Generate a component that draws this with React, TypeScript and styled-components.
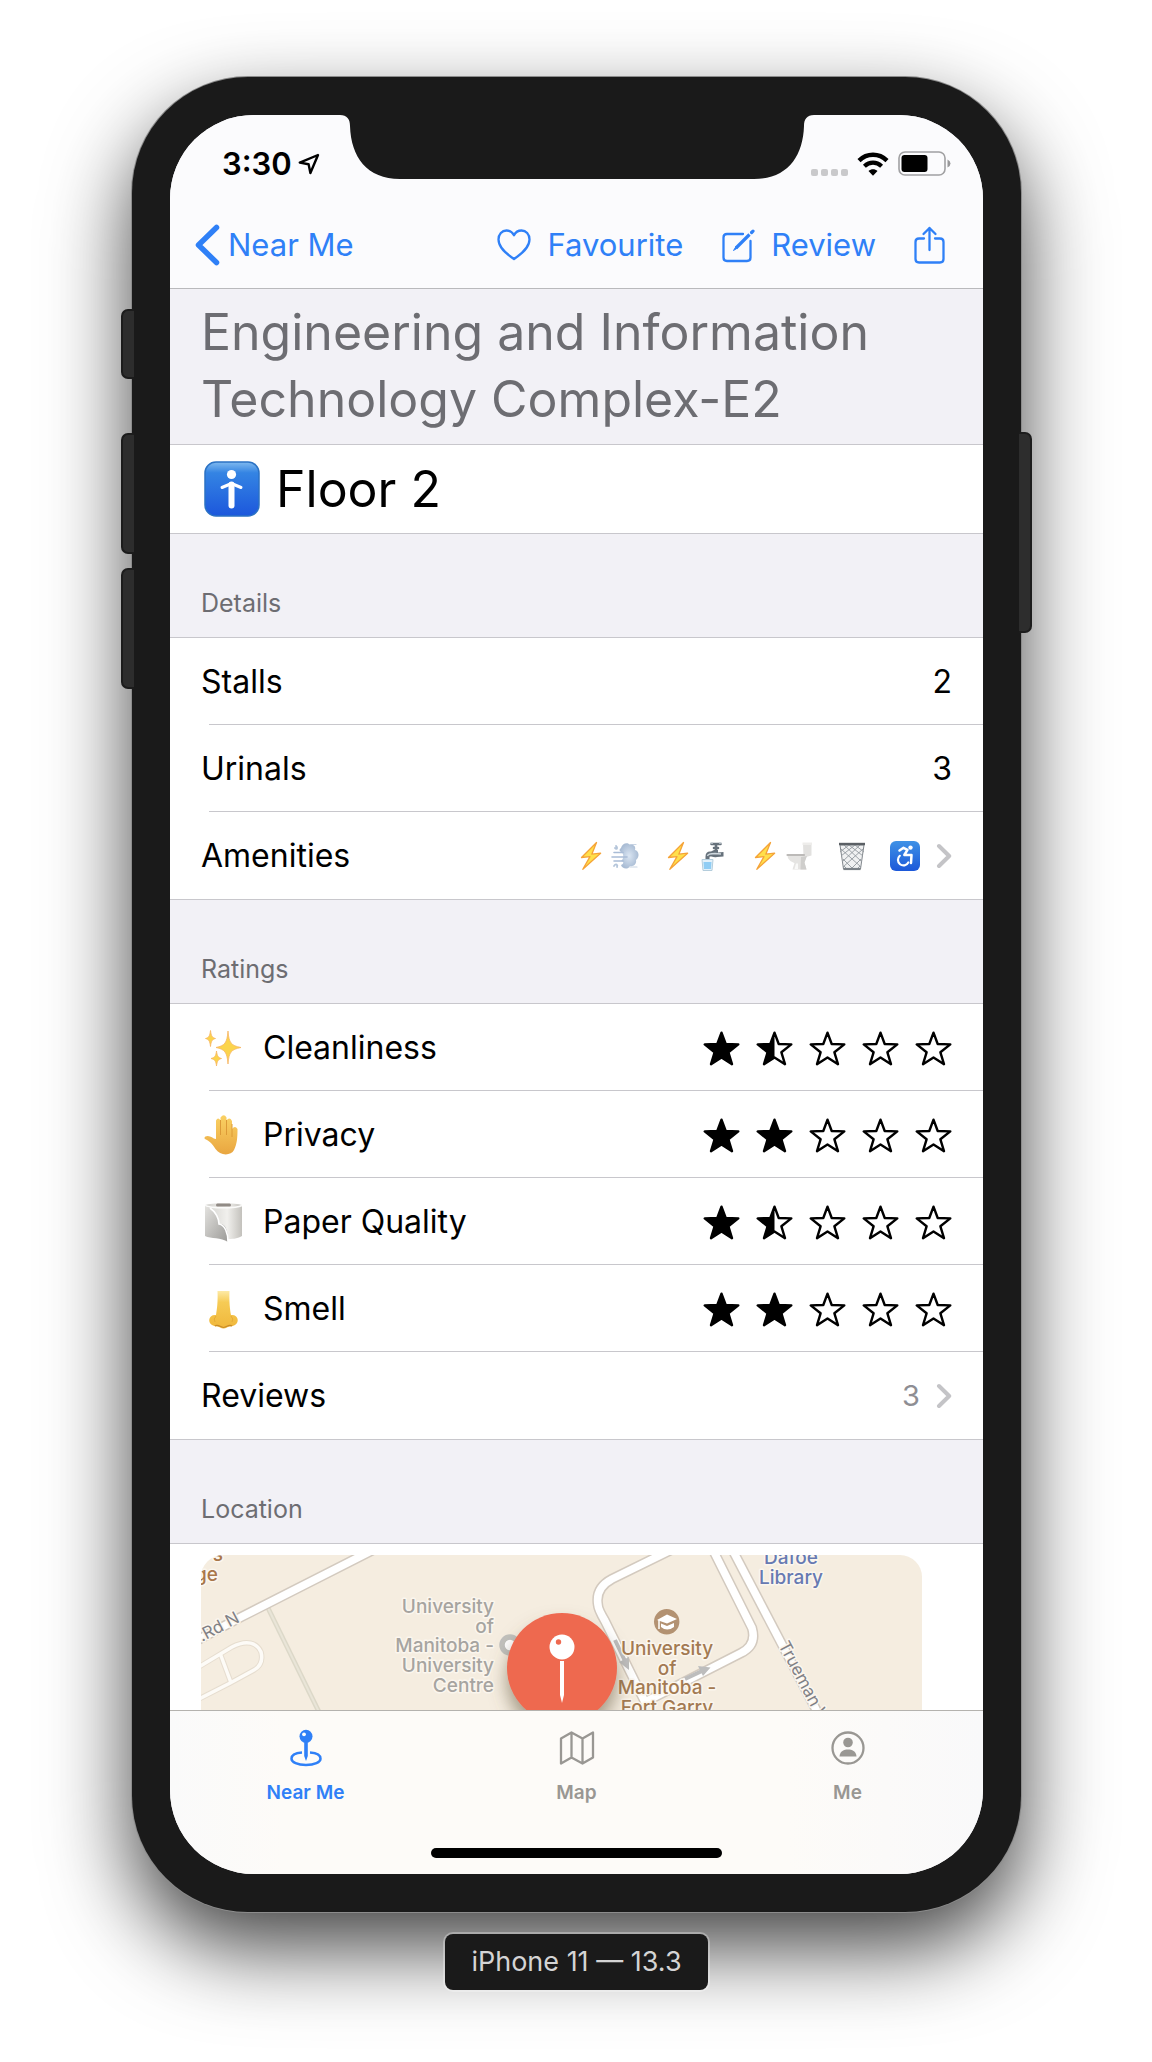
import React from "react";
import styled, { createGlobalStyle } from "styled-components";

const BLUE = "#2f80f7";
const LINE = "#c8c7cc";

const GlobalStyle = createGlobalStyle`
  *, *::before, *::after { box-sizing: border-box; }
  body {
    margin: 0;
    background: #fff;
    color: #000;
    font-family: Inter, "Liberation Sans", sans-serif;
    -webkit-font-smoothing: antialiased;
  }
  h1, h2, p, ul, dl, dd, dt { margin: 0; padding: 0; font: inherit; }
  svg { display: block; flex: none; }
`;

const Page = styled.div`
  min-height: 100vh;
  display: flex;
  flex-direction: column;
  align-items: center;
  gap: 22px;
  padding: 77px 23px 72px 24px;
  overflow: hidden;
`;

const Phone = styled.div`
  position: relative;
  z-index: 0;
  width: 100%;
  max-width: 889px;
  padding: 38px;
  border-radius: 116px;
  background: #1a1a1a;
  box-shadow: 0 0 0 1px #8c8c8c, 0 36px 84px rgba(0, 0, 0, 0.74);
`;

const SideButton = styled.span<{ $side: "left" | "right"; $top: number; $height: number }>`
  position: absolute;
  ${(p) => p.$side}: -11px;
  top: ${(p) => p.$top}px;
  width: 13px;
  height: ${(p) => p.$height}px;
  border: 2px solid #1c1c1c;
  border-${(p) => (p.$side === "left" ? "right" : "left")}: 0;
  border-radius: ${(p) => (p.$side === "left" ? "7px 0 0 7px" : "0 7px 7px 0")};
  background: #2d2d2d;
`;

const Screen = styled.div`
  position: relative;
  display: flex;
  flex-direction: column;
  overflow: hidden;
  border-radius: 84px;
  background: #f2f1f6;
`;

const Notch = styled.svg`
  position: absolute;
  top: 0;
  left: 50%;
  margin-left: -237px;
`;

const Header = styled.header`
  background: #fbfbfd;
  border-bottom: 1px solid #b9b9bc;
`;

const StatusBar = styled.div`
  display: flex;
  align-items: center;
  justify-content: space-between;
  height: 87px;
  padding: 11px 32px 0 52px;
`;

const StatusGroup = styled.div<{ $gap: number }>`
  display: flex;
  align-items: center;
  gap: ${(p) => p.$gap}px;
`;

const Clock = styled.time`
  font-size: 31px;
  line-height: 40px;
  font-weight: 600;
`;

const NavBar = styled.nav`
  display: flex;
  align-items: center;
  justify-content: space-between;
  height: 86px;
  padding: 0 38px 0 25px;
`;

const NavActions = styled.div`
  display: flex;
  align-items: center;
  gap: 38px;
`;

const BackLink = styled.a`
  display: flex;
  align-items: center;
  gap: 8px;
  color: ${BLUE};
  font-size: 31px;
  line-height: 40px;
  text-decoration: none;
`;

const NavButton = styled.button`
  display: flex;
  align-items: center;
  gap: 16px;
  padding: 0;
  border: 0;
  background: none;
  color: ${BLUE};
  font: inherit;
  font-size: 31px;
  line-height: 40px;
  cursor: pointer;
`;

const Title = styled.h1`
  padding: 10px 31px 11px;
  color: #6d6d72;
  font-size: 50px;
  line-height: 67px;
`;

const FloorRow = styled.div`
  display: flex;
  align-items: center;
  gap: 16px;
  height: 90px;
  padding: 0 34px;
  border: solid ${LINE};
  border-width: 1px 0;
  background: #fff;
  font-size: 50px;
  line-height: 67px;
`;

const SectionTitle = styled.h2`
  padding: 54px 31px 19px;
  color: #6d6d72;
  font-size: 25px;
  line-height: 30px;
`;

const List = styled.ul`
  list-style: none;
  border: solid ${LINE};
  border-width: 1px 0;
  background: #fff;
`;

const Row = styled.li`
  & + &::before {
    content: "";
    display: block;
    height: 1px;
    margin: -1px 0 0 39px;
    background: ${LINE};
  }
`;

const RowBody = styled.div`
  display: flex;
  align-items: center;
  justify-content: space-between;
  height: 87px;
  padding: 0 31px;
  color: #000;
  font-size: 32px;
  line-height: 40px;
  text-decoration: none;
`;

const RowLabel = styled.span`
  display: flex;
  align-items: center;
  gap: 20px;
`;

const RowValue = styled.span`
  display: flex;
  align-items: center;
  gap: 16px;
`;

const Count = styled.span`
  color: #8e8e93;
  font-size: 29px;
`;

const Amenities = styled.span`
  display: flex;
  gap: 23px;
`;

const AmenityGroup = styled.span`
  display: flex;
  gap: 4px;
`;

const Stars = styled.span`
  display: flex;
  gap: 16px;
  padding-top: 2px;
`;

const MapRow = styled.div`
  padding: 11px 61px 0 31px;
  border-top: 1px solid ${LINE};
  background: #fff;
`;

const MapCanvas = styled.svg`
  width: 100%;
  height: 155px;
  border-radius: 22px 22px 0 0;
  background: #f5ede0;
  font-weight: 500;
  font-size: 19px;
`;

const TabBar = styled.nav`
  padding-bottom: 16px;
  border-top: 1px solid #b4b2ae;
  background: linear-gradient(90deg, #fafafa, #fdfbf8 14%, #fdfbf8 76%, #f9f9fa);
`;

const Tabs = styled.div`
  display: grid;
  grid-template-columns: repeat(3, 1fr);
  height: 137px;
`;

const Tab = styled.a<{ $active?: boolean }>`
  display: flex;
  flex-direction: column;
  align-items: center;
  gap: 14px;
  padding-top: 18px;
  color: ${(p) => (p.$active ? BLUE : "#999793")};
  font-size: 19px;
  line-height: 24px;
  font-weight: 600;
  text-decoration: none;
`;

const HomeIndicator = styled.div`
  width: 291px;
  height: 10px;
  margin: 0 auto;
  border-radius: 5px;
  background: #000;
`;

const DeviceLabel = styled.p`
  position: relative;
  padding: 13px 26px;
  border-radius: 8px;
  background: #1a1a1a;
  box-shadow: 0 0 0 2px rgba(255, 255, 255, 0.3);
  color: #d4d4d4;
  font-size: 27px;
  line-height: 30px;
`;

const STAR = "M18.5 1.7 22.7 13 35.3 13.4 25.4 21.3 29 33.2 18.5 26.4 8 33.2 11.6 21.3 1.7 13.4 14.3 13Z";
const HALF_STAR = "M18.5 1.7V26.4L8 33.2 11.6 21.3 1.7 13.4 14.3 13Z";

function Star({ fill }: { fill: number }) {
  return (
    <svg width="37" height="35" viewBox="0 0 37 35" aria-hidden="true">
      <path d={STAR} fill={fill === 1 ? "#000" : "none"} stroke="#000" strokeWidth="2.4" strokeLinejoin="round" />
      {fill === 0.5 && <path d={HALF_STAR} />}
    </svg>
  );
}

function Rating({ value }: { value: number }) {
  return (
    <Stars role="img" aria-label={`${value} out of 5`}>
      {[0, 1, 2, 3, 4].map((i) => (
        <Star key={i} fill={Math.max(0, Math.min(1, value - i))} />
      ))}
    </Stars>
  );
}

const Chevron = () => (
  <svg width="16" height="26" viewBox="0 0 16 26" fill="none" aria-hidden="true">
    <path d="M3 3 13.2 13 3 23" stroke="#c4c4c7" strokeWidth="4" strokeLinecap="round" strokeLinejoin="round" />
  </svg>
);

const Bolt = () => (
  <svg width="30" height="30" viewBox="0 0 30 30" aria-hidden="true">
    <path d="M20.5 1.5 5.5 16.5 14 15.6 6.8 28.3 24.6 12.2 15.8 13.2Z" fill="#ffe04a" stroke="#f5a338" strokeWidth="1.3" strokeLinejoin="round" />
  </svg>
);

const Wind = () => (
  <svg width="30" height="30" viewBox="0 0 30 30" aria-hidden="true">
    <defs>
      <radialGradient id="puff">
        <stop offset="0" stopColor="#dbe6f3" />
        <stop offset="1" stopColor="#a9bcd4" />
      </radialGradient>
    </defs>
    <path d="M20 3.500H26M20 26H27" stroke="#c9d5e4" strokeWidth="1.2" strokeLinecap="round" />
    <path d="M11 7C12 2 18 1 20 4C24 3 26 6 25 9C29 10 30 16 26 19C27 23 23 26 20 25C18 29 12 28 11 24C14 23 14 20 11 20C14 18 14 12 11 11C9 10 9 8 11 7Z" fill="url(#puff)" />
    <path d="M4 11.500H13M2 16H17M4 20H13" stroke="#a9bcd6" strokeWidth="1.6" strokeLinecap="round" />
    <path d="M5 7C7 9 8 7 6 5M4 25C6 22 8 24 7 26" fill="none" stroke="#b4c5da" strokeWidth="1.8" strokeLinecap="round" />
  </svg>
);

const Tap = () => (
  <svg width="30" height="30" viewBox="0 0 30 30" aria-hidden="true">
    <path d="M8.500 18V15.500C8.500 11.500 11 10 14 10.500L17 9H21V11.500L26.500 11V15.500L20 16C16 17 13.500 14.500 12.500 16V18Z" fill="#66717b" />
    <path d="M10.500 15C11 12.500 15 12.500 18 12.500L24 13" fill="none" stroke="#cfd8de" strokeWidth="1.400" />
    <path d="M14.500 3H23.500M19 3V9M17 7H21" stroke="#66717b" strokeWidth="2.600" strokeLinecap="round" />
    <path d="M13.500 2H16M22 2H24.500" stroke="#c4ccd2" strokeWidth="1.500" />
    <path d="M5 18.500H16L15 29.500H6Z" fill="#e3f1fa" stroke="#b4cddc" />
    <path d="M6.500 21H14.500L14 28H7Z" fill="#90cdf4" />
  </svg>
);

const Toilet = () => (
  <svg width="30" height="30" viewBox="0 0 30 30" aria-hidden="true">
    <path d="M19 2H27.500V14.500L22 16H19.500Z" fill="#e2e1df" />
    <path d="M18.500 1.500H28V4H18.500Z" fill="#eeedeb" />
    <path d="M3.500 14C3.500 19 7 20.500 10.500 22L8.500 28.500H22.500L20.500 21.500 23 14Z" fill="#e5e4e2" />
    <path d="M17 16 23 15 20.500 21.500 22.500 28.500H16.500Z" fill="#cfcecc" />
    <path d="M3.500 14H20" stroke="#bcbab8" strokeWidth="2.200" strokeLinecap="round" />
    <path d="M12 22.500 10.500 28H14V22.500Z" fill="#f9f9f8" />
  </svg>
);

const Basket = () => (
  <svg width="30" height="30" viewBox="0 0 30 30" aria-hidden="true">
    <path d="M3 4H27L23.5 28H6.5Z" fill="#f0f1f2" stroke="#82878c" />
    <path
      d="M4 8 24 26M7 4 25 21M12 4 26 15M18 4 27 11M6 18 16 28M7 25 10 28M26 8 6 26M23 4 5 21M18 4 4 15M12 4 3 11M24 18 14 28M23 25 20 28"
      stroke="#92989e"
      strokeWidth="0.9"
    />
    <path d="M2 3H28" stroke="#5b6065" strokeWidth="2.4" />
    <path d="M6.5 28H23.5" stroke="#7b8187" strokeWidth="2.2" />
  </svg>
);

const Wheelchair = () => (
  <svg width="30" height="30" viewBox="0 0 30 30" aria-hidden="true">
    <defs>
      <linearGradient id="accessTile" x2="0" y2="1">
        <stop offset="0" stopColor="#3f92e6" />
        <stop offset="1" stopColor="#1c58d9" />
      </linearGradient>
    </defs>
    <rect width="30" height="30" rx="6" fill="url(#accessTile)" />
    <circle cx="20.500" cy="6.600" r="2.200" fill="#fff" />
    <path d="M9.500 9.500 13.500 6.800 17.500 8.800 14.300 14H21.500L21 22" fill="none" stroke="#fff" strokeWidth="2.500" strokeLinejoin="round" strokeLinecap="round" />
    <path d="M9.800 14.800A5.500 5.500 0 1 0 18.300 21.500" fill="none" stroke="#fff" strokeWidth="2.200" strokeLinecap="round" />
  </svg>
);

const Sparkles = () => (
  <svg width="42" height="42" viewBox="0 0 42 42" aria-hidden="true">
    <g fill="#fbd44c" stroke="#f6b565" strokeWidth="0.8" strokeLinejoin="round">
      <path d="M27 4C28 16 30 18.500 40 20.500C30 22.500 28 25 27 37C26 25 24 22.500 15 20.500C24 18.500 26 16 27 4Z" />
      <path d="M9.500 3.500C10.200 9 11 10.500 14.500 11.500C11 12.500 10.200 14 9.500 19.500C8.800 14 8 12.500 4.500 11.500C8 10.500 8.800 9 9.500 3.500Z" />
      <path d="M15.500 24C16.200 29 17 30.500 20.500 31.500C17 32.500 16.200 34 15.500 39C14.800 34 14 32.500 10 31.500C14 30.500 14.800 29 15.500 24Z" />
    </g>
  </svg>
);

const Hand = () => (
  <svg width="42" height="42" viewBox="0 0 42 42" aria-hidden="true">
    <defs>
      <linearGradient id="skin" x2="0" y2="1">
        <stop offset="0" stopColor="#fad163" />
        <stop offset="1" stopColor="#e9a640" />
      </linearGradient>
    </defs>
    <path
      d="M15 25V6.500Q17 2.500 19.500 6.500V3.500Q23 -1 25.500 3.500V6.500Q28.500 2.500 31 7V15Q34 11 36.500 15C36.500 24 36 30 33 36C30 42 19 42 14.500 35C11 29 8 27 4 25C2 23 6 21 9 22.500C12 23.500 13 25 15 25Z"
      fill="url(#skin)"
    />
    <path d="M19.500 6V21M25.500 6V21M31 10V23" stroke="#dc9a37" strokeWidth="1" />
  </svg>
);

const PaperRoll = () => (
  <svg width="42" height="42" viewBox="0 0 42 42" aria-hidden="true">
    <defs>
      <linearGradient id="roll">
        <stop offset="0" stopColor="#d2d1cd" />
        <stop offset="0.6" stopColor="#f1f0ed" />
        <stop offset="1" stopColor="#c3c1bc" />
      </linearGradient>
      <linearGradient id="sheet" x2="1" y2="1">
        <stop offset="0" stopColor="#e3e2df" />
        <stop offset="1" stopColor="#9b9a97" />
      </linearGradient>
    </defs>
    <path d="M4 4C10 1.500 35 1.500 41 4V35C36 38 30 38 27 38L5 35Z" fill="url(#roll)" />
    <path d="M4 4.500C10 7.500 35 7.500 41 4.500" fill="none" stroke="#fbfbfa" strokeWidth="1.500" />
    <rect x="15" y="2.500" width="15" height="3" rx="1.500" fill="#918b86" />
    <path d="M4 5.500C13 7 17 15 18 23C25 22 27 30 27 41C20 36 10 38 4 35Z" fill="url(#sheet)" />
    <path d="M9 7C15 11 18 18 18 23C24 24 27 32 27 41" fill="none" stroke="#fff" strokeWidth="1.600" />
  </svg>
);

const Nose = () => (
  <svg width="42" height="42" viewBox="0 0 42 42" aria-hidden="true">
    <defs>
      <linearGradient id="nose" x2="0" y2="1">
        <stop offset="0" stopColor="#fdeaa6" />
        <stop offset="0.3" stopColor="#f6cb55" />
        <stop offset="1" stopColor="#f0b73b" />
      </linearGradient>
    </defs>
    <path d="M16.500 3H28.500C28 14 29 22 30 27C37 26 39 34 34 37C31 39 28 38 26 39.500Q22.500 41.500 19 39.500C17 38 14 39 11 37C6 34 8 26 15 27C16 21 17 14 16.500 3Z" fill="url(#nose)" />
    <path d="M14 38C17 36 19 39 22.500 39.500C26 39 28 36 31 38" fill="none" stroke="#c88b28" strokeWidth="1.200" />
    <path d="M15 28Q12 31 14 34M30 28Q33 31 31 34" fill="none" stroke="#e5aa37" />
  </svg>
);

const FloorBadge = () => (
  <svg width="56" height="56" viewBox="0 0 56 56" aria-hidden="true">
    <defs>
      <linearGradient id="floorTile" x2="0" y2="1">
        <stop offset="0" stopColor="#7fb9ef" />
        <stop offset="0.2" stopColor="#3484e3" />
        <stop offset="1" stopColor="#1c57dc" />
      </linearGradient>
    </defs>
    <rect x="1" y="1" width="54" height="54" rx="11" fill="url(#floorTile)" stroke="#2b72c4" strokeWidth="1.500" />
    <circle cx="27.500" cy="13.500" r="4.600" fill="#fff" />
    <path d="M18 26.500 27.500 22.500 37 26.500" fill="none" stroke="#fff" strokeWidth="3" strokeLinecap="round" strokeLinejoin="round" />
    <path d="M27.500 23.500V44.500" stroke="#fff" strokeWidth="6" strokeLinecap="round" />
  </svg>
);

const LocationArrow = () => (
  <svg width="22" height="22" viewBox="0 0 22 22" aria-hidden="true">
    <path d="M20 2 1.800 9.600 10.600 11.200 12.400 20Z" fill="none" stroke="#000" strokeWidth="2.400" strokeLinejoin="round" />
  </svg>
);

const SignalDots = () => (
  <svg width="37" height="25" viewBox="0 0 37 25" fill="#c9c9cb" aria-hidden="true">
    {[0, 10, 20, 30].map((x) => (
      <rect key={x} x={x} y="17" width="7" height="7" rx="2" />
    ))}
  </svg>
);

const Wifi = () => (
  <svg width="32" height="25" viewBox="0 0 32 25" fill="none" aria-hidden="true">
    <path d="M2 8.600C10 .8 22 .8 30 8.600" stroke="#000" strokeWidth="4.400" />
    <path d="M7.400 14.200C12.500 9.400 19.500 9.400 24.600 14.200" stroke="#000" strokeWidth="4.200" />
    <path d="M11.500 19C14 16.700 18 16.700 20.500 19L16 23.800Z" fill="#000" />
  </svg>
);

const Battery = () => (
  <svg width="53" height="26" viewBox="0 0 53 26" aria-hidden="true">
    <rect x="1" y="1" width="46" height="23" rx="6" fill="none" stroke="#a0a0a2" strokeWidth="1.600" />
    <rect x="3.500" y="4" width="26" height="17" rx="3" />
    <path d="M49.500 8.500Q52.500 10 52.500 12.500T49.500 16.500Z" fill="#98989a" />
  </svg>
);

const BackChevron = () => (
  <svg width="25" height="42" viewBox="0 0 25 42" fill="none" aria-hidden="true">
    <path d="M21.500 3.500 3.500 21 21.500 38.500" stroke="currentColor" strokeWidth="5.500" strokeLinecap="round" strokeLinejoin="round" />
  </svg>
);

const Heart = () => (
  <svg width="34" height="32" viewBox="0 0 34 32" fill="none" aria-hidden="true">
    <path
      d="M17 30C9 24.500 1.500 18.500 1.500 10.500C1.500 5 5 1.500 9.500 1.500C13 1.500 15.500 3.300 17 6.300C18.500 3.300 21 1.500 24.500 1.500C29 1.500 32.500 5 32.500 10.500C32.500 18.500 25 24.500 17 30Z"
      stroke="currentColor"
      strokeWidth="2.300"
      strokeLinejoin="round"
    />
  </svg>
);

const Compose = () => (
  <svg width="34" height="38" viewBox="0 0 34 38" fill="none" stroke="currentColor" strokeWidth="2.300" aria-hidden="true">
    <path d="M22 8H6Q2.500 8 2.500 11.500V31.500Q2.500 35 6 35H26Q29.500 35 29.500 31.500V15" strokeLinecap="round" />
    <path d="M15 22 28.500 8.500" strokeWidth="3.200" />
    <path d="M12.500 24.500 15 20.500 16.500 22Z" fill="currentColor" strokeWidth="1" />
    <path d="M30.600 6.500 32 5.100" strokeWidth="3.200" strokeLinecap="round" />
  </svg>
);

const Share = () => (
  <svg width="31" height="38" viewBox="0 0 31 38" fill="none" stroke="currentColor" strokeWidth="2.300" strokeLinecap="round" strokeLinejoin="round" aria-hidden="true">
    <path d="M10 12.500H5Q1.500 12.500 1.500 16V33Q1.500 36.500 5 36.500H26Q29.500 36.500 29.500 33V16Q29.500 12.500 26 12.500H21" />
    <path d="M15.500 24V2M9.500 8 15.500 2 21.500 8" />
  </svg>
);

const PinIcon = () => (
  <svg width="36" height="38" viewBox="0 0 36 38" aria-hidden="true">
    <path d="M14 23.600C7.500 24 3.500 26.500 3.500 29.800C3.500 33.300 9.500 36 18 36S32.500 33.300 32.500 29.800C32.500 26.500 28.500 24 22 23.600" fill="none" stroke="currentColor" strokeWidth="2.500" />
    <circle cx="18" cy="7.300" r="6.500" fill="currentColor" />
    <circle cx="16" cy="5.300" r="1.900" fill="#fff" />
    <path d="M16.200 13H19.800V27L18 32 16.200 27Z" fill="currentColor" />
  </svg>
);

const MapIcon = () => (
  <svg width="36" height="38" viewBox="0 0 36 38" fill="none" stroke="currentColor" strokeWidth="2.300" strokeLinejoin="round" aria-hidden="true">
    <path d="M2 9.500 12.500 3.500 23.500 9.500 34 3.500V28.500L23.500 34.500 12.500 28.500 2 34.500ZM12.500 3.500V28.500M23.500 9.500V34.500" />
  </svg>
);

const PersonIcon = () => (
  <svg width="36" height="38" viewBox="0 0 36 38" aria-hidden="true">
    <circle cx="18" cy="19" r="15.500" fill="none" stroke="currentColor" strokeWidth="2.300" />
    <circle cx="18" cy="13.500" r="4.800" fill="currentColor" />
    <path d="M9.500 27.500C10 22 14 20.500 18 20.500S26 22 26.500 27.500Z" fill="currentColor" />
  </svg>
);

const ROADS = [
  "M-6 86.500 40.700 61.700 172 -5",
  "M470 -5 411 24Q394 33 397 50Q397 54 404 66L444 147 540 98Q556 90 551 73L511 -7",
  "M531 -6 620 164",
];

function LocationMap() {
  return (
    <MapCanvas viewBox="0 0 721 155" preserveAspectRatio="xMidYMid slice" role="img" aria-label="Map of the location">
      <defs>
        <filter id="pinShadow" x="-40%" y="-40%" width="180%" height="180%">
          <feDropShadow dx="0" dy="12" stdDeviation="9" floodColor="#6b5f45" floodOpacity="0.6" />
        </filter>
      </defs>

      <g fill="none">
        <path d="M67 53 118 157" stroke="#dcd8c8" strokeWidth="5" />
        <path d="M67 53 118 157" stroke="#e9e5d8" strokeWidth="2" />
        <g stroke="#e6ddcf" strokeWidth="5.500">
          <path d="M-4 113 31 92C46 84 56 88 60 97C62 105 60 111 53 115L29.700 127.700 -4 145" />
          <path d="M19.700 100 29.700 127" />
        </g>
        <g stroke="#fdfbf7" strokeWidth="3.500">
          <path d="M-4 113 31 92C46 84 56 88 60 97C62 105 60 111 53 115L29.700 127.700 -4 145" />
          <path d="M19.700 100 29.700 127" />
        </g>
        {ROADS.map((d) => (
          <path key={d} d={d} stroke="#d3cabf" strokeWidth="10.500" />
        ))}
        {ROADS.map((d) => (
          <path key={d} d={d} stroke="#fff" strokeWidth="7.500" />
        ))}
        <path d="M414 85 424 106M484 124 501 116" stroke="#bdbdbd" strokeWidth="4" />
      </g>
      <path d="M418 107 428 102 428 115ZM497 111 509.500 112.500 502 121Z" fill="#bdbdbd" />

      <g stroke="#fbf6ee" strokeWidth="3" paintOrder="stroke" strokeLinejoin="round">
        <g fill="#a9774a" textAnchor="end">
          <text x="22" y="6">s</text>
          <text x="17" y="26">ge</text>
        </g>
        <g fill="#a6a4a0" textAnchor="end">
          <text x="293" y="58">University</text>
          <text x="293" y="78">of</text>
          <text x="293" y="97">Manitoba -</text>
          <text x="293" y="117">University</text>
          <text x="293" y="137">Centre</text>
        </g>
        <g fill="#a37a52" textAnchor="middle">
          <text x="466" y="100">University</text>
          <text x="466" y="120">of</text>
          <text x="466" y="139">Manitoba -</text>
          <text x="466" y="159">Fort Garry</text>
        </g>
        <g fill="#677ab2" textAnchor="middle">
          <text x="590" y="9">Dafoe</text>
          <text x="590" y="29">Library</text>
        </g>
        <g fill="#808085" fontSize="17" fontWeight="400">
          <text transform="translate(1 87) rotate(-28)">.Rd N</text>
          <text transform="translate(577 90) rotate(62)">Trueman W</text>
        </g>
      </g>

      <circle cx="465.700" cy="66.700" r="12.700" fill="#b39272" />
      <path d="M456 65 466 59.500 476 64 466 68.500ZM460 68.500 466 71 473 68V72Q466 77 460 72Z" fill="#fff" />
      <path d="M458 65V74" stroke="#fff" strokeWidth="1.500" />

      <circle cx="309" cy="90" r="8" fill="#fff" stroke="#c0c0bd" strokeWidth="5.500" />

      <circle cx="361" cy="113" r="55" fill="#ee6950" filter="url(#pinShadow)" />
      <circle cx="361" cy="92" r="12.500" fill="#fff" />
      <circle cx="357.500" cy="87" r="2.700" fill="#ee6950" />
      <path d="M359 106H363V140L361 148 359 140Z" fill="#fff" />
    </MapCanvas>
  );
}

const RATINGS = [
  { label: "Cleanliness", value: 1.5, Icon: Sparkles },
  { label: "Privacy", value: 2, Icon: Hand },
  { label: "Paper Quality", value: 1.5, Icon: PaperRoll },
  { label: "Smell", value: 2, Icon: Nose },
];

const TABS = [
  { label: "Near Me", href: "#near-me", Icon: PinIcon, active: true },
  { label: "Map", href: "#map", Icon: MapIcon, active: false },
  { label: "Me", href: "#me", Icon: PersonIcon, active: false },
];

export default function App() {
  return (
    <Page>
      <GlobalStyle />
      <Phone>
        <SideButton $side="left" $top={232} $height={70} />
        <SideButton $side="left" $top={356} $height={121} />
        <SideButton $side="left" $top={491} $height={121} />
        <SideButton $side="right" $top={355} $height={201} />
        <Screen>
          <Header>
            <StatusBar>
              <StatusGroup $gap={6}>
                <Clock>3:30</Clock>
                <LocationArrow />
              </StatusGroup>
              <StatusGroup $gap={9}>
                <SignalDots />
                <Wifi />
                <Battery />
              </StatusGroup>
            </StatusBar>
            <NavBar aria-label="Page actions">
              <BackLink href="#near-me">
                <BackChevron />
                Near Me
              </BackLink>
              <NavActions>
                <NavButton type="button">
                  <Heart />
                  Favourite
                </NavButton>
                <NavButton type="button">
                  <Compose />
                  Review
                </NavButton>
                <NavButton type="button" aria-label="Share">
                  <Share />
                </NavButton>
              </NavActions>
            </NavBar>
          </Header>

          <main>
            <Title>Engineering and Information Technology Complex-E2</Title>
            <FloorRow>
              <FloorBadge />
              Floor 2
            </FloorRow>

            <SectionTitle>Details</SectionTitle>
            <List>
              <Row>
                <RowBody>
                  <span>Stalls</span>
                  <span>2</span>
                </RowBody>
              </Row>
              <Row>
                <RowBody>
                  <span>Urinals</span>
                  <span>3</span>
                </RowBody>
              </Row>
              <Row>
                <RowBody as="a" href="#amenities">
                  <span>Amenities</span>
                  <RowValue>
                    <Amenities>
                      <AmenityGroup><Bolt /><Wind /></AmenityGroup>
                      <AmenityGroup><Bolt /><Tap /></AmenityGroup>
                      <AmenityGroup><Bolt /><Toilet /></AmenityGroup>
                      <Basket />
                      <Wheelchair />
                    </Amenities>
                    <Chevron />
                  </RowValue>
                </RowBody>
              </Row>
            </List>

            <SectionTitle>Ratings</SectionTitle>
            <List>
              {RATINGS.map(({ label, value, Icon }) => (
                <Row key={label}>
                  <RowBody>
                    <RowLabel>
                      <Icon />
                      {label}
                    </RowLabel>
                    <Rating value={value} />
                  </RowBody>
                </Row>
              ))}
              <Row>
                <RowBody as="a" href="#reviews">
                  <span>Reviews</span>
                  <RowValue>
                    <Count>3</Count>
                    <Chevron />
                  </RowValue>
                </RowBody>
              </Row>
            </List>

            <SectionTitle>Location</SectionTitle>
            <MapRow>
              <LocationMap />
            </MapRow>
          </main>

          <TabBar aria-label="Main">
            <Tabs>
              {TABS.map(({ label, href, Icon, active }) => (
                <Tab key={label} href={href} $active={active}>
                  <Icon />
                  {label}
                </Tab>
              ))}
            </Tabs>
            <HomeIndicator />
          </TabBar>
          <Notch width="474" height="65" viewBox="0 0 474 65" aria-hidden="true">
            <path d="M0 0C7 0 10 4 10 11C11 42 27 64 60 64H414C447 64 463 42 464 11C464 4 467 0 474 0Z" fill="#1a1a1a" />
          </Notch>
        </Screen>
      </Phone>
      <DeviceLabel>iPhone 11 — 13.3</DeviceLabel>
    </Page>
  );
}
